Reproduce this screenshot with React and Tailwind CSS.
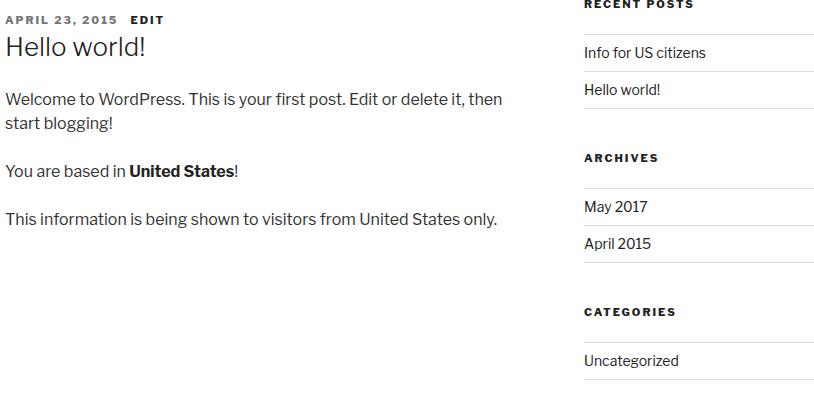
import React from 'react';

const font = { fontFamily: '"Libre Franklin", Inter, "Liberation Sans", sans-serif' };

const widgets = [
  { title: 'Recent Posts', items: ['Info for US citizens', 'Hello world!'] },
  { title: 'Archives', items: ['May 2017', 'April 2015'] },
  { title: 'Categories', items: ['Uncategorized'] },
];

function Widget({ title, items, first }) {
  return (
    <section className={first ? '-mt-1' : 'mt-[41px]'}>
      <h2 className="mb-[22px] text-[11px] font-extrabold uppercase leading-4 tracking-[0.18em] text-[#222]">
        {title}
      </h2>
      <ul className="border-b border-[#ddd]">
        {items.map((item) => (
          <li key={item} className="border-t border-[#ddd] py-[6px] text-[14px] leading-6 text-[#222]">
            {item}
          </li>
        ))}
      </ul>
    </section>
  );
}

export default function App() {
  return (
    <div className="flex h-[415px] w-[814px] overflow-hidden bg-white" style={font}>
      <article className="w-[584px] shrink-0 pl-[5px] pr-[54px] text-[#333]">
        <div className="mt-3 text-[11px] font-extrabold uppercase leading-4 tracking-[0.18em]">
          <span className="text-[#767676]">April 23, 2015</span>
          <span className="ml-3 text-[#222]">Edit</span>
        </div>
        <h1 className="mt-[1px] text-[26px] font-light leading-9 text-[#222]">Hello world!</h1>
        <div className="mt-[23px] space-y-6 text-[16px] leading-6">
          <p>Welcome to WordPress. This is your first post. Edit or delete it, then start blogging!</p>
          <p>
            You are based in <strong className="font-bold text-[#222]">United States</strong>!
          </p>
          <p>This information is being shown to visitors from United States only.</p>
        </div>
      </article>
      <aside className="flex-1">
        {widgets.map((w, i) => (
          <Widget key={w.title} {...w} first={i === 0} />
        ))}
      </aside>
    </div>
  );
}
